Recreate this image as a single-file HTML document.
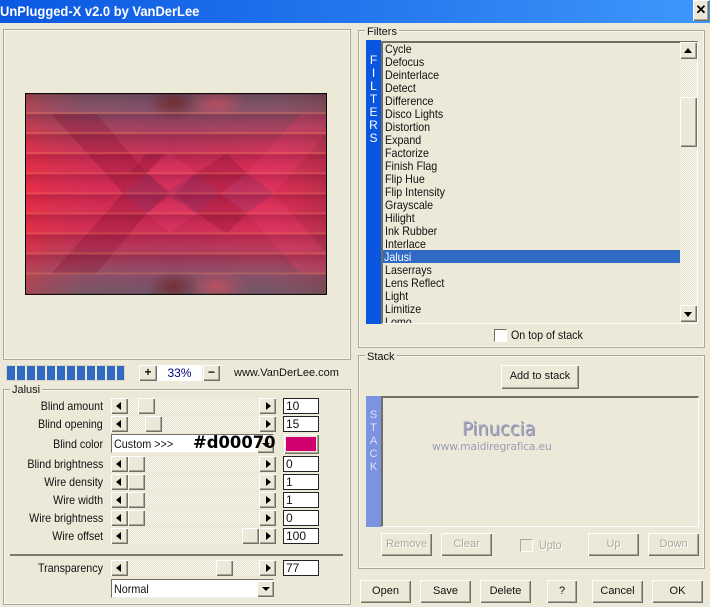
<!DOCTYPE html>
<html><head><meta charset="utf-8"><style>
html,body{margin:0;padding:0}
body{width:710px;height:607px;overflow:hidden;background:#ece9d8;position:relative;font:11px/13px "Liberation Sans",sans-serif;color:#111}
div,span{position:absolute;white-space:nowrap;box-sizing:border-box}
.grp{border:1px solid #aca899;box-shadow:0 0 0 1px #f8f7f0 inset}
.glb{background:#ece9d8;padding:0 2px;font-size:11px;line-height:13px}
.btn{background:#ece9d8;box-shadow:inset 1px 1px 0 #fff,inset -1px -1px 0 #716f64,inset -2px -2px 0 #aca899;text-align:center}
.txt{font-size:11px;line-height:23px;color:#111}
.dis{color:#aca899;text-shadow:1px 1px 0 #fff}
.lb{right:237px;text-align:right;font-size:12px;line-height:16px;top:0;transform-origin:right;transform:scaleX(.89)}
.row{left:0;width:340px;height:16px}
.trk{left:111px;top:0;width:165px;height:16px;background:conic-gradient(#f7f5ec 25%,#e5e2d0 0 50%,#f7f5ec 0 75%,#e5e2d0 0) 0 0/2px 2px}
.arr{top:0;width:17px;height:16px}
.arr:after{content:"";position:absolute;top:4px;border:4px solid transparent}
.al{left:111px}.al:after{left:5px;border-right:5px solid #000;border-left:0}
.ar{left:259px}.ar:after{left:7px;border-left:5px solid #000;border-right:0}
.th{top:0;width:17px;height:16px}
.ed{left:283px;top:0;width:36px;height:16px;background:#fff;border:1px solid #222;font-size:12px;line-height:14px;padding-left:2px}
.combo{left:111px;width:163px;background:#fff;border:1px solid #716f64;border-right-color:#eee;border-bottom-color:#eee}
.ctx{left:114px;font-size:12px;line-height:14px;transform-origin:left;transform:scaleX(.9)}
.li{left:385px;font-size:12px;line-height:13px;top:0;transform-origin:left;transform:scaleX(.89)}
.cb{background:#fff;border:1px solid #716f64;border-right-color:#fff;border-bottom-color:#fff;width:13px;height:13px}
.v{left:366px;width:15px;color:#fff;text-align:center;font-size:12px}
</style></head><body>

<div style="left:0;top:0;width:710px;height:23px;background:linear-gradient(90deg,#0a58e2,#2a7cf0 60%,#3e98fc)"></div>
<div style="left:0;top:3px;color:#fff;font:bold 14px/16px 'Liberation Sans',sans-serif;transform-origin:left;transform:scaleX(.925)">UnPlugged-X v2.0 by VanDerLee</div>
<div class="btn" style="left:693px;top:0;width:16px;height:21px;font:bold 13px/20px 'Liberation Sans',sans-serif;color:#000">✕</div>

<div class="grp" style="left:3px;top:29px;width:348px;height:331px"></div>
<svg style="position:absolute;left:25px;top:93px" width="302" height="202" viewBox="16 10 904 604">
<defs>
<linearGradient id="v" x1="0" y1="0" x2="0" y2="1"><stop offset="0" stop-color="#6c5a68"/><stop offset=".1" stop-color="#86506a"/><stop offset=".2" stop-color="#b03c5c"/><stop offset=".32" stop-color="#d42c54"/><stop offset=".5" stop-color="#dc2a54"/><stop offset=".68" stop-color="#d42c54"/><stop offset=".8" stop-color="#b03c5c"/><stop offset=".9" stop-color="#86506a"/><stop offset="1" stop-color="#6c5a68"/></linearGradient>
<linearGradient id="h" x1="0" y1="0" x2="1" y2="0"><stop offset="0" stop-color="#ff3030" stop-opacity=".4"/><stop offset=".2" stop-color="#c04050" stop-opacity=".12"/><stop offset=".5" stop-color="#803060" stop-opacity=".12"/><stop offset=".8" stop-color="#c04050" stop-opacity=".05"/><stop offset="1" stop-color="#803030" stop-opacity=".35"/></linearGradient>
<linearGradient id="b" x1="0" y1="0" x2="0" y2="1"><stop offset="0" stop-color="#400020" stop-opacity=".2"/><stop offset=".5" stop-color="#400020" stop-opacity=".02"/><stop offset=".9" stop-color="#fff" stop-opacity=".02"/><stop offset=".9" stop-color="#ff9060" stop-opacity=".28"/><stop offset="1" stop-color="#ff9060" stop-opacity=".28"/></linearGradient>
<radialGradient id="r"><stop offset="0" stop-color="#c05060" stop-opacity=".9"/><stop offset="1" stop-color="#c05060" stop-opacity="0"/></radialGradient>
<radialGradient id="r2"><stop offset="0" stop-color="#702828" stop-opacity=".8"/><stop offset="1" stop-color="#702828" stop-opacity="0"/></radialGradient>
</defs>
<rect x="16" y="10" width="904" height="604" fill="url(#v)"/>
<rect x="16" y="10" width="904" height="604" fill="url(#h)"/>
<g fill="#801030" fill-opacity=".28">
<polygon points="95,72 230,72 380,250 450,310 380,370 230,550 95,550 310,310"/>
<polygon points="530,250 620,190 680,250 600,310 680,370 620,430 530,370 465,310"/>
<polygon points="380,190 435,190 380,250 330,250"/>
</g>
<g fill="#f04070" fill-opacity=".3">
<polygon points="380,250 450,190 530,250 450,300"/>
<polygon points="380,370 450,320 530,370 450,430"/>
<polygon points="840,72 920,72 920,130 760,310 680,250"/>
<polygon points="680,370 760,310 920,490 920,550 840,550"/>
</g>
<g fill="#8a3a70" fill-opacity=".3">
<polygon points="310,310 380,250 450,310 380,370"/>
<polygon points="600,310 680,250 760,310 680,370"/>
<polygon points="450,300 530,250 600,310 530,370 450,320"/>
</g>
<ellipse cx="590" cy="40" rx="90" ry="50" fill="url(#r)"/><ellipse cx="460" cy="40" rx="80" ry="50" fill="url(#r2)"/>
<ellipse cx="590" cy="590" rx="90" ry="50" fill="url(#r)"/><ellipse cx="460" cy="590" rx="80" ry="50" fill="url(#r2)"/>
<rect x="16" y="10" width="904" height="63" fill="url(#b)"/>
<rect x="16" y="73" width="904" height="60" fill="url(#b)"/>
<rect x="16" y="133" width="904" height="60" fill="url(#b)"/>
<rect x="16" y="193" width="904" height="60" fill="url(#b)"/>
<rect x="16" y="253" width="904" height="60" fill="url(#b)"/>
<rect x="16" y="313" width="904" height="60" fill="url(#b)"/>
<rect x="16" y="373" width="904" height="60" fill="url(#b)"/>
<rect x="16" y="433" width="904" height="60" fill="url(#b)"/>
<rect x="16" y="493" width="904" height="60" fill="url(#b)"/>
<rect x="17.5" y="11.5" width="901" height="601" fill="none" stroke="#000" stroke-width="3"/>
</svg>

<div style="left:6px;top:365px;width:119px;height:16px;background:repeating-linear-gradient(90deg,#316ac5 0 8px,#ece9d8 8px 10px);border:1px solid #d8d5c4"></div>
<div class="btn" style="left:139px;top:365px;width:18px;height:16px;font:bold 12px/14px 'Liberation Sans',sans-serif">+</div>
<div style="left:157px;top:365px;width:45px;height:16px;background:#fff;color:#000080;text-align:center;font-size:12px;line-height:16px">33%</div>
<div class="btn" style="left:203px;top:365px;width:17px;height:16px;font:bold 12px/14px 'Liberation Sans',sans-serif">−</div>
<div style="left:234px;top:366px;font-size:11px;line-height:14px">www.VanDerLee.com</div>

<div class="grp" style="left:3px;top:389px;width:348px;height:216px"></div>
<div class="glb" style="left:10px;top:384px">Jalusi</div>

<div class="row" style="top:398px"><span class="lb">Blind amount</span><div class="trk"></div><div class="btn arr al"></div><div class="btn arr ar"></div><div class="btn th" style="left:138px"></div><div class="ed">10</div></div>
<div class="row" style="top:416px"><span class="lb">Blind opening</span><div class="trk"></div><div class="btn arr al"></div><div class="btn arr ar"></div><div class="btn th" style="left:145px"></div><div class="ed">15</div></div>
<div class="row" style="top:436px"><span class="lb">Blind color</span></div>
<div class="combo" style="top:434px;height:19px"></div>
<div class="ctx" style="top:437px">Custom &gt;&gt;&gt;</div>
<div class="btn" style="left:257px;top:437px;width:17px;height:16px"></div>
<div style="left:262px;top:443px;border:4px solid transparent;border-top:4px solid #000;border-bottom:0"></div>
<div style="left:193px;top:434px;font:bold 17px/19px 'DejaVu Sans',sans-serif;color:#000;transform-origin:left;transform:scaleX(.965)">#d00070</div>
<div class="btn" style="left:284px;top:434px;width:35px;height:20px"></div>
<div style="left:286px;top:437px;width:30px;height:14px;background:#d00070"></div>
<div class="row" style="top:456px"><span class="lb">Blind brightness</span><div class="trk"></div><div class="btn arr al"></div><div class="btn arr ar"></div><div class="btn th" style="left:128px"></div><div class="ed">0</div></div>
<div class="row" style="top:474px"><span class="lb">Wire density</span><div class="trk"></div><div class="btn arr al"></div><div class="btn arr ar"></div><div class="btn th" style="left:128px"></div><div class="ed">1</div></div>
<div class="row" style="top:492px"><span class="lb">Wire width</span><div class="trk"></div><div class="btn arr al"></div><div class="btn arr ar"></div><div class="btn th" style="left:128px"></div><div class="ed">1</div></div>
<div class="row" style="top:510px"><span class="lb">Wire brightness</span><div class="trk"></div><div class="btn arr al"></div><div class="btn arr ar"></div><div class="btn th" style="left:128px"></div><div class="ed">0</div></div>
<div class="row" style="top:528px"><span class="lb">Wire offset</span><div class="trk"></div><div class="btn arr al"></div><div class="btn arr ar"></div><div class="btn th" style="left:242px"></div><div class="ed">100</div></div>
<div style="left:10px;top:554px;width:333px;height:2px;background:#7d7a68"></div>
<div class="row" style="top:560px"><span class="lb">Transparency</span><div class="trk"></div><div class="btn arr al"></div><div class="btn arr ar"></div><div class="btn th" style="left:216px"></div><div class="ed">77</div></div>
<div class="combo" style="top:579px;height:19px"></div>
<div class="ctx" style="top:582px">Normal</div>
<div class="btn" style="left:257px;top:581px;width:17px;height:16px"></div>
<div style="left:262px;top:587px;border:4px solid transparent;border-top:4px solid #000;border-bottom:0"></div>

<div class="grp" style="left:358px;top:30px;width:347px;height:318px"></div>
<div class="glb" style="left:365px;top:26px">Filters</div>
<div style="left:366px;top:40px;width:15px;height:284px;background:#0a56e0"></div>
<div style="left:381px;top:41px;width:317px;height:283px;border:1px solid #716f64;border-right:1px solid #fff;border-bottom:1px solid #fff;border-top-width:2px;border-left-width:2px;overflow:hidden"></div>
<div class="v" style="top:54px;line-height:13px;white-space:normal">F<br>I<br>L<br>T<br>E<br>R<br>S</div>
<div class="li" style="top:43px">Cycle</div>
<div class="li" style="top:56px">Defocus</div>
<div class="li" style="top:69px">Deinterlace</div>
<div class="li" style="top:82px">Detect</div>
<div class="li" style="top:95px">Difference</div>
<div class="li" style="top:108px">Disco Lights</div>
<div class="li" style="top:121px">Distortion</div>
<div class="li" style="top:134px">Expand</div>
<div class="li" style="top:147px">Factorize</div>
<div class="li" style="top:160px">Finish Flag</div>
<div class="li" style="top:173px">Flip Hue</div>
<div class="li" style="top:186px">Flip Intensity</div>
<div class="li" style="top:199px">Grayscale</div>
<div class="li" style="top:212px">Hilight</div>
<div class="li" style="top:225px">Ink Rubber</div>
<div class="li" style="top:238px">Interlace</div>
<div style="left:383px;top:250px;width:297px;height:13px;background:#316ac5"></div>
<div class="li" style="top:251px;color:#fff;left:384px">Jalusi</div>
<div class="li" style="top:264px">Laserrays</div>
<div class="li" style="top:277px">Lens Reflect</div>
<div class="li" style="top:290px">Light</div>
<div class="li" style="top:303px">Limitize</div>
<div style="left:383px;top:316px;width:297px;height:7px;overflow:hidden"><div class="li" style="top:0;left:2px">Lomo</div></div>
<div style="left:680px;top:42px;width:17px;height:280px;background:conic-gradient(#f7f5ec 25%,#e5e2d0 0 50%,#f7f5ec 0 75%,#e5e2d0 0) 0 0/2px 2px"></div>
<div class="btn" style="left:680px;top:42px;width:17px;height:17px"></div>
<div style="left:684px;top:48px;border:4px solid transparent;border-bottom:5px solid #000;border-top:0"></div>
<div class="btn" style="left:680px;top:97px;width:17px;height:50px"></div>
<div class="btn" style="left:680px;top:305px;width:17px;height:17px"></div>
<div style="left:684px;top:312px;border:4px solid transparent;border-top:5px solid #000;border-bottom:0"></div>
<div class="cb" style="left:494px;top:329px"></div>
<div class="li" style="left:511px;top:329px">On top of stack</div>

<div class="grp" style="left:358px;top:355px;width:347px;height:214px"></div>
<div class="glb" style="left:365px;top:351px">Stack</div>
<div class="btn txt" style="left:501px;top:365px;width:78px;height:24px">Add to stack</div>
<div style="left:366px;top:396px;width:15px;height:131px;background:#7b93e0"></div>
<div style="left:381px;top:396px;width:318px;height:131px;border:1px solid #fff;border-top:2px solid #716f64;border-left:2px solid #716f64"></div>
<div class="v" style="top:409px;line-height:13px;white-space:normal;color:#dde3f5;font-size:11px">S<br>T<br>A<br>C<br>K</div>
<div style="left:462px;top:418px;font:19px/22px 'DejaVu Sans',sans-serif;color:#a4a5c2;text-shadow:1px 1px 0 #8a8ba5;transform-origin:left;transform:scaleX(.94)">Pinuccia</div>
<div style="left:432px;top:440px;font:11px/13px 'DejaVu Sans',sans-serif;color:#9c9db8;letter-spacing:-.2px;transform-origin:left;transform:scaleX(.98)">www.maidiregrafica.eu</div>
<div class="btn txt dis" style="left:381px;top:533px;width:51px;height:23px">Remove</div>
<div class="btn txt dis" style="left:441px;top:533px;width:51px;height:23px">Clear</div>
<div class="cb" style="left:520px;top:539px;background:#ece9d8;border-color:#aca899 #fff #fff #aca899"></div>
<div class="li dis" style="left:539px;top:539px">Upto</div>
<div class="btn txt dis" style="left:588px;top:533px;width:51px;height:23px">Up</div>
<div class="btn txt dis" style="left:648px;top:533px;width:51px;height:23px">Down</div>

<div class="btn txt" style="left:360px;top:580px;width:51px;height:23px">Open</div>
<div class="btn txt" style="left:420px;top:580px;width:51px;height:23px">Save</div>
<div class="btn txt" style="left:480px;top:580px;width:51px;height:23px">Delete</div>
<div class="btn txt" style="left:547px;top:580px;width:30px;height:23px">?</div>
<div class="btn txt" style="left:592px;top:580px;width:51px;height:23px">Cancel</div>
<div class="btn txt" style="left:652px;top:580px;width:51px;height:23px">OK</div>
</body></html>
